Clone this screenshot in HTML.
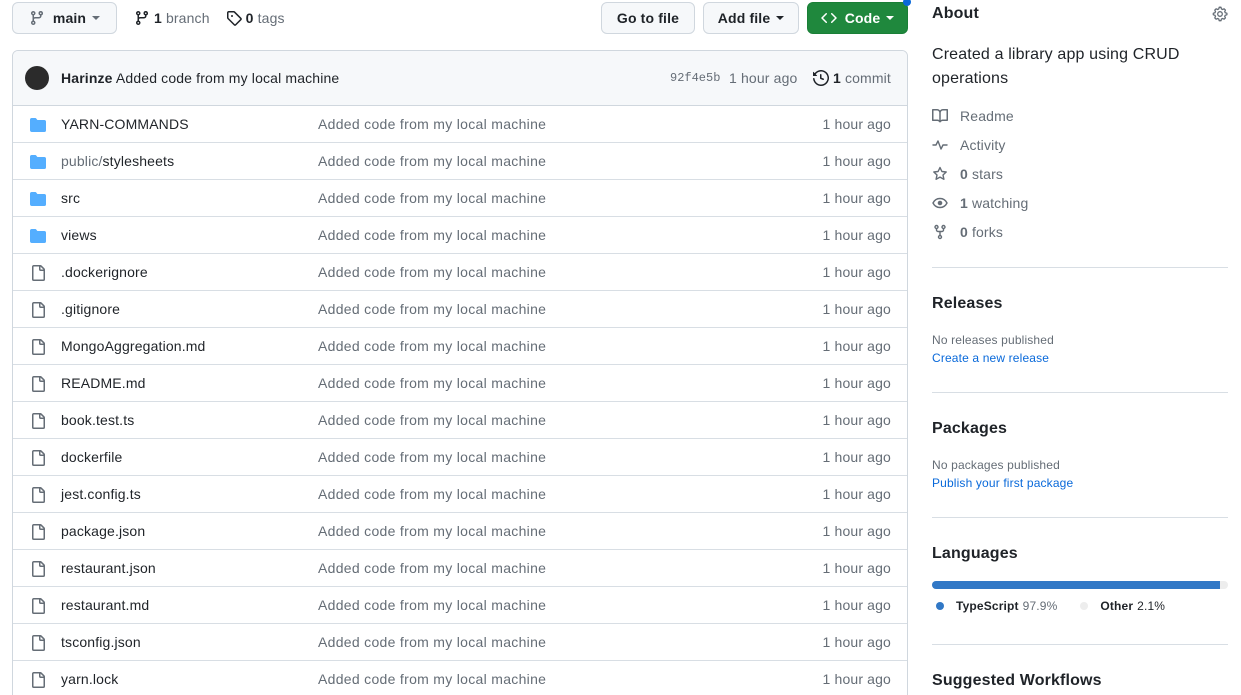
<!DOCTYPE html>
<html style="height:695px;overflow:hidden"><head><meta charset="utf-8"><style>
*{box-sizing:border-box;margin:0;padding:0}
body{width:1241px;height:695px;overflow:hidden;background:#fff;font-family:"Liberation Sans",sans-serif;color:#1f2328;position:relative;font-size:14px;letter-spacing:0.15px}
.abs{position:absolute}
.btn{position:absolute;top:2px;height:32px;border:1px solid #d0d7de;border-radius:6px;background:#f6f8fa;font-size:14px;font-weight:bold;display:flex;align-items:center;justify-content:center;color:#1f2328}
.caret{display:inline-block;width:0;height:0;border-left:4px solid transparent;border-right:4px solid transparent;border-top:4px solid currentColor;margin-left:6px}
.table{position:absolute;left:12px;top:50px;width:896px;height:660px;border:1px solid #d0d7de;border-radius:6px;overflow:hidden}
.hdr{height:55px;background:#f6f8fa;border-bottom:1px solid #d0d7de;position:relative}
.row{height:37px;border-bottom:1px solid #d8dee4;position:relative;font-size:14px}
.row .ic{position:absolute;left:17px;top:11px}
.row .n{position:absolute;left:48px;top:10px}
.row .m{position:absolute;left:305px;top:10px;color:#656d76;letter-spacing:0.3px}
.row .t{position:absolute;right:16px;top:10px;color:#656d76}
.side{position:absolute;left:932px;width:296px}
.h2{font-size:16px;font-weight:bold}
.li{position:absolute;left:932px;font-size:14px;color:#656d76;display:flex;align-items:center}
.li svg{margin-right:12px}
.li b{color:#656d76;margin-right:4px}
.hr{position:absolute;left:932px;width:296px;height:1px;background:#d8dee4}
.sm{font-size:12px}
a{color:#0969da;text-decoration:none}
</style></head><body>

<div class="btn" style="left:12px;width:105px;"><svg width="16" height="16" viewBox="0 0 16 16" fill="#656d76" style="margin-right:8px"><path d="M9.5 3.25a2.25 2.25 0 1 1 3 2.122V6A2.5 2.5 0 0 1 10 8.5H6a1 1 0 0 0-1 1v1.128a2.251 2.251 0 1 1-1.5 0V5.372a2.25 2.25 0 1 1 1.5 0v1.836A2.5 2.5 0 0 1 6 7h4a1 1 0 0 0 1-1v-.628A2.25 2.25 0 0 1 9.5 3.25Zm-6 0a.75.75 0 1 0 1.5 0 .75.75 0 0 0-1.5 0Zm8.25-.75a.75.75 0 1 0 0 1.5.75.75 0 0 0 0-1.5ZM4.25 12a.75.75 0 1 0 0 1.5.75.75 0 0 0 0-1.5Z"/></svg>main<span class="caret" style="color:#656d76"></span></div>
<div class="abs" style="left:134px;top:10px;display:flex;align-items:center;color:#656d76"><svg width="16" height="16" viewBox="0 0 16 16" fill="#1f2328" style="margin-right:4px"><path d="M9.5 3.25a2.25 2.25 0 1 1 3 2.122V6A2.5 2.5 0 0 1 10 8.5H6a1 1 0 0 0-1 1v1.128a2.251 2.251 0 1 1-1.5 0V5.372a2.25 2.25 0 1 1 1.5 0v1.836A2.5 2.5 0 0 1 6 7h4a1 1 0 0 0 1-1v-.628A2.25 2.25 0 0 1 9.5 3.25Zm-6 0a.75.75 0 1 0 1.5 0 .75.75 0 0 0-1.5 0Zm8.25-.75a.75.75 0 1 0 0 1.5.75.75 0 0 0 0-1.5ZM4.25 12a.75.75 0 1 0 0 1.5.75.75 0 0 0 0-1.5Z"/></svg><b style="color:#1f2328;margin-right:4px">1</b>branch
<svg width="16" height="16" viewBox="0 0 16 16" fill="#1f2328" style="margin:0 4px 0 16px"><path d="M1 7.775V2.75C1 1.784 1.784 1 2.750 1h5.025c.464 0 .91.184 1.238.513l6.25 6.25a1.75 1.75 0 0 1 0 2.474l-5.026 5.026a1.75 1.750 0 0 1-2.474 0l-6.25-6.250A1.752 1.752 0 0 1 1 7.775Zm1.5 0c0 .066.026.13.073.177l6.25 6.25a.25.25 0 0 0 .354 0l5.025-5.025a.25.25 0 0 0 0-.354l-6.25-6.25a.25.25 0 0 0-.177-.073H2.75a.25.25 0 0 0-.25.25ZM6 5a1 1 0 1 1 0 2 1 1 0 0 1 0-2Z"/></svg><b style="color:#1f2328;margin-right:4px">0</b>tags</div>

<div class="btn" style="left:601px;width:94px;">Go to file</div>
<div class="btn" style="left:703px;width:96px;">Add file<span class="caret"></span></div>
<div class="btn" style="left:807px;width:101px;background:#1f883d;border-color:#1a7f37;color:#fff"><svg width="16" height="16" viewBox="0 0 16 16" fill="#fff" style="margin-right:8px"><path d="m11.28 3.22 4.25 4.25a.75.75 0 0 1 0 1.06l-4.25 4.25a.749.749 0 0 1-1.275-.326.749.749 0 0 1 .215-.734L13.94 8l-3.72-3.72a.749.749 0 0 1 .326-1.275.749.749 0 0 1 .734.215Zm-6.56 0a.751.751 0 0 1 1.042.018.751.751 0 0 1 .018 1.042L2.06 8l3.72 3.72a.749.749 0 0 1-.326 1.275.749.749 0 0 1-.734-.215L.47 8.53a.75.75 0 0 1 0-1.06Z"/></svg>Code<span class="caret"></span></div>
<div class="abs" style="left:903px;top:-2px;width:8px;height:8px;border-radius:50%;background:#0969da"></div>

<div class="table">
<div class="hdr">
<div class="abs" style="left:12px;top:15px;width:24px;height:24px;border-radius:50%;background:#2b2b2b"></div>
<div class="abs" style="left:48px;top:19px"><b>Harinze</b> Added code from my local machine</div>
<div class="abs" style="left:657px;top:20px;font-family:'Liberation Mono',monospace;font-size:12px;color:#656d76;letter-spacing:0">92f4e5b</div>
<div class="abs" style="left:716px;top:19px;color:#656d76">1 hour ago</div>
<div class="abs" style="left:800px;top:19px;display:flex;align-items:center;color:#656d76"><svg width="16" height="16" viewBox="0 0 16 16" fill="#1f2328" style="margin-right:4px"><path d="m.427 1.927 1.215 1.215a8.002 8.002 0 1 1-1.6 5.685.75.75 0 1 1 1.493-.154 6.5 6.5 0 1 0 1.18-4.458l1.358 1.358A.25.25 0 0 1 3.896 6H.25A.25.25 0 0 1 0 5.75V2.104a.25.25 0 0 1 .427-.177ZM7.75 4a.75.75 0 0 1 .75.75v2.992l2.028.812a.75.75 0 0 1-.557 1.392l-2.5-1A.751.751 0 0 1 7 8.25v-3.5A.75.75 0 0 1 7.75 4Z"/></svg><b style="color:#1f2328;margin-right:4px">1</b>commit</div>
</div>
<div id="rows"></div>
</div>

<div class="side h2" style="top:5px;font-size:16px">About</div>
<svg class="abs" style="left:1212px;top:6px" width="16" height="16" viewBox="0 0 16 16" fill="none" stroke="#656d76" stroke-width="1.3"><circle cx="8" cy="8" r="2.3"/><path d="M8 1.2l1 .1.4 1.6 1.2.6 1.5-.7 1.3 1.3-.7 1.5.6 1.2 1.6.4v1.6l-1.6.4-.6 1.2.7 1.5-1.3 1.3-1.5-.7-1.2.6-.4 1.6H7.2l-.4-1.6-1.2-.6-1.5.7-1.3-1.3.7-1.5-.6-1.2-1.6-.4V7.2l1.6-.4.6-1.2-.7-1.5 1.3-1.3 1.5.7 1.2-.6.4-1.6z" stroke-linejoin="round"/></svg>
<div class="side" style="top:43px;font-size:16px;line-height:24px">Created a library app using CRUD operations</div>

<div class="li" style="top:108px"><svg width="16" height="16" viewBox="0 0 16 16" fill="#656d76"><path d="M0 1.75A.75.75 0 0 1 .75 1h4.253c1.227 0 2.317.59 3 1.501A3.743 3.743 0 0 1 11.006 1h4.245a.75.75 0 0 1 .75.75v10.5a.75.75 0 0 1-.75.75h-4.507a2.25 2.25 0 0 0-1.591.659l-.622.621a.75.75 0 0 1-1.06 0l-.622-.621A2.25 2.25 0 0 0 5.258 13H.75a.75.75 0 0 1-.75-.75Zm7.251 10.324.004-5.073-.002-2.253A2.25 2.25 0 0 0 5.003 2.5H1.5v9h3.757a3.75 3.75 0 0 1 1.994.574ZM8.755 4.75l-.004 7.322a3.752 3.752 0 0 1 1.992-.572H14.5v-9h-3.495a2.25 2.25 0 0 0-2.250 2.25Z"/></svg>Readme</div>
<div class="li" style="top:137px"><svg width="16" height="16" viewBox="0 0 16 16" fill="none" stroke="#656d76" stroke-width="1.4" stroke-linejoin="round" stroke-linecap="round"><path d="M1 8h3l2-4 3 8 2-4h4"/></svg>Activity</div>
<div class="li" style="top:166px"><svg width="16" height="16" viewBox="0 0 16 16" fill="none" stroke="#656d76" stroke-width="1.4" stroke-linejoin="round"><path d="M8 1.5l1.9 4 4.3.5-3.2 3 .9 4.3L8 11.1l-3.9 2.2.9-4.3-3.2-3 4.3-.5z"/></svg><b>0</b>stars</div>
<div class="li" style="top:195px"><svg width="16" height="16" viewBox="0 0 16 16" fill="none" stroke="#656d76" stroke-width="1.4"><path d="M1 8c1.5-3 4-4.5 7-4.5S13.5 5 15 8c-1.5 3-4 4.5-7 4.5S2.5 11 1 8z"/><circle cx="8" cy="8" r="1.6" fill="#656d76"/></svg><b>1</b>watching</div>
<div class="li" style="top:224px"><svg width="16" height="16" viewBox="0 0 16 16" fill="none" stroke="#656d76" stroke-width="1.4"><circle cx="4.5" cy="3" r="1.5"/><circle cx="11.5" cy="3" r="1.5"/><circle cx="8" cy="13" r="1.5"/><path d="M4.5 4.5v1.5a1.5 1.5 0 0 0 1.5 1.5h4a1.5 1.5 0 0 0 1.5-1.5V4.5M8 7.5v4"/></svg><b>0</b>forks</div>
<div class="hr" style="top:267px"></div>

<div class="side h2" style="top:295px">Releases</div>
<div class="side sm" style="top:333px;color:#656d76">No releases published</div>
<div class="side sm" style="top:351px"><a>Create a new release</a></div>
<div class="hr" style="top:392px"></div>

<div class="side h2" style="top:420px">Packages</div>
<div class="side sm" style="top:458px;color:#656d76">No packages published</div>
<div class="side sm" style="top:476px"><a>Publish your first package</a></div>
<div class="hr" style="top:517px"></div>

<div class="side h2" style="top:545px">Languages</div>
<div class="abs" style="left:932px;top:581px;width:296px;height:8px;border-radius:4px;background:#ededed;overflow:hidden"><div style="width:288px;height:8px;background:#3178c6"></div></div>
<div class="abs sm" style="left:936px;top:599px;display:flex;align-items:center">
<span style="width:8px;height:8px;border-radius:50%;background:#3178c6;margin-right:12px"></span><b style="margin-right:4px">TypeScript</b><span style="color:#656d76">97.9%</span>
<span style="width:8px;height:8px;border-radius:50%;background:#ededed;margin:0 12px 0 23px"></span><b style="margin-right:4px">Other</b><span>2.1%</span></div>
<div class="hr" style="top:644px"></div>
<div class="side h2" style="top:672px">Suggested Workflows</div>

<script>
var d=[["YARN-COMMANDS",1],["public/stylesheets",1],["src",1],["views",1],[".dockerignore"],[".gitignore"],["MongoAggregation.md"],["README.md"],["book.test.ts"],["dockerfile"],["jest.config.ts"],["package.json"],["restaurant.json"],["restaurant.md"],["tsconfig.json"],["yarn.lock"]];
var fo='<svg width="16" height="16" viewBox="0 0 16 16" fill="#54aeff"><path d="M1.75 1A1.75 1.75 0 0 0 0 2.75v10.5C0 14.216.784 15 1.75 15h12.5A1.75 1.75 0 0 0 16 13.25v-8.5A1.75 1.75 0 0 0 14.25 3H7.5a.25.25 0 0 1-.2-.1l-.9-1.2C6.07 1.26 5.55 1 5 1H1.75Z"/></svg>';
var fi='<svg width="16" height="16" viewBox="0 0 16 16" fill="#656d76"><path d="M2 1.75C2 .784 2.784 0 3.75 0h6.586c.464 0 .909.184 1.237.513l2.914 2.914c.329.328.513.773.513 1.237v9.586A1.75 1.75 0 0 1 13.25 16h-9.5A1.75 1.75 0 0 1 2 14.25Zm1.75-.25a.25.25 0 0 0-.25.25v12.5c0 .138.112.25.25.25h9.5a.25.25 0 0 0 .25-.25V6h-2.75A1.75 1.75 0 0 1 9 4.25V1.5Zm6.75.062V4.25c0 .138.112.25.25.25h2.688l-.011-.013-2.914-2.914-.013-.011Z"/></svg>';
var h='';d.forEach(function(r){var n=r[0];if(n.indexOf('/')>0){n='<span style="color:#656d76">public/</span>stylesheets'}h+='<div class="row"><span class="ic">'+(r[1]?fo:fi)+'</span><span class="n">'+n+'</span><span class="m">Added code from my local machine</span><span class="t">1 hour ago</span></div>'});
document.getElementById('rows').innerHTML=h;
</script>
</body></html>
